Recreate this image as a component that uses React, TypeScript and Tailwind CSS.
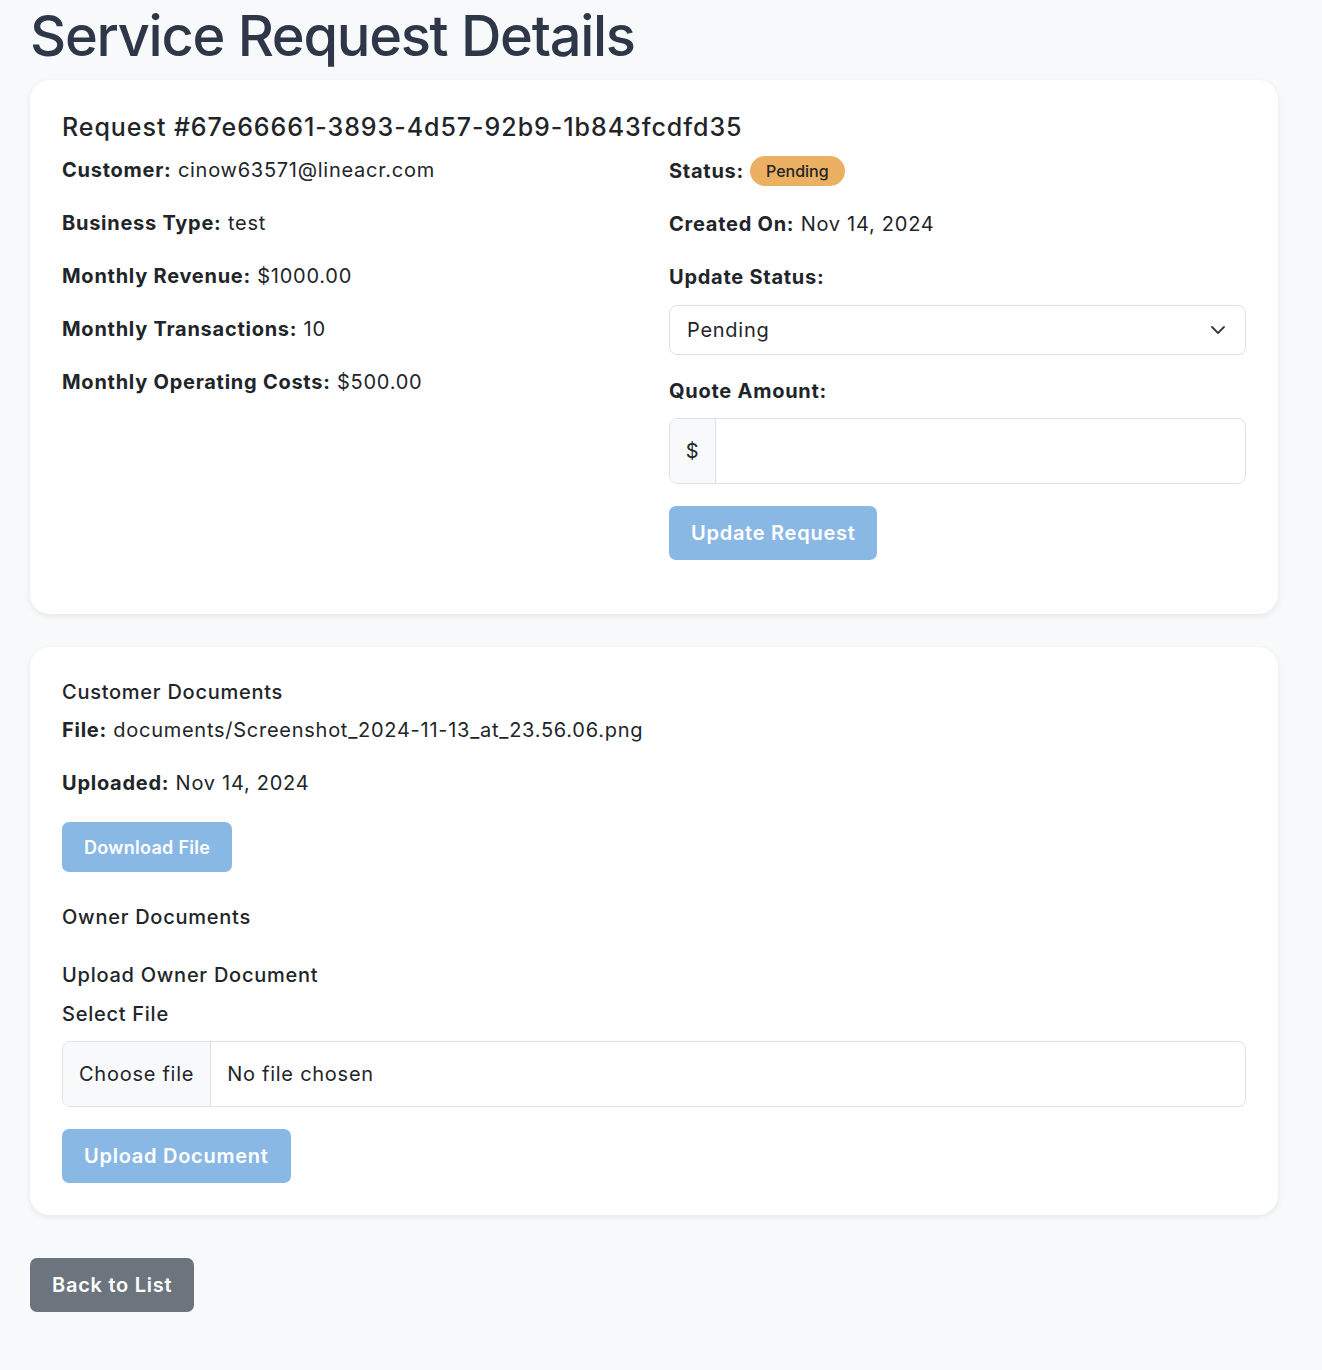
import { useState } from "react"

const FONT = { fontFamily: "Inter, 'Noto Sans', sans-serif" }

const LEFT_ROWS: { label: string; value: string }[] = [
  { label: "Customer:", value: "cinow63571@lineacr.com" },
  { label: "Business Type:", value: "test" },
  { label: "Monthly Revenue:", value: "$1000.00" },
  { label: "Monthly Transactions:", value: "10" },
  { label: "Monthly Operating Costs:", value: "$500.00" }
]

function Row({ label, value }: { label: string; value: string }) {
  return (
    <p className="mb-[23px] text-[20px] leading-[30px]">
      <span className="font-bold">{label}</span> {value}
    </p>
  )
}

export default function App() {
  const [status, setStatus] = useState("Pending")
  const [quote, setQuote] = useState("")

  return (
    <div
      className="min-h-[1370px] bg-[#f8f9fa] px-[30px] pb-10 tracking-[0.74px] text-[#212529]"
      style={FONT}>
      <h1 className="pt-[4px] text-[56px] font-medium leading-[64px] tracking-[-1.3px] text-[#2d3748]">
        Service Request Details
      </h1>

      {/* Request card */}
      <div className="mt-[12px] w-[1248px] rounded-[20px] bg-white p-8 shadow-[0_2px_6px_rgba(0,0,0,0.08)]">
        <h4 className="mb-[13px] text-[25px] font-medium leading-[30px] tracking-[0.95px]">
          Request #67e66661-3893-4d57-92b9-1b843fcdfd35
        </h4>
        <div className="flex gap-[30px]">
          <div className="w-[577px]">
            {LEFT_ROWS.map((r) => (
              <Row key={r.label} label={r.label} value={r.value} />
            ))}
          </div>
          <div className="w-[577px] pb-[22px] pt-[1px]">
            <div className="mb-[23px] flex h-[30px] items-center text-[20px]">
              <span className="font-bold">Status:</span>
              <span className="ml-[6px] rounded-full bg-[#ecb063] px-[16px] py-[4px] text-[16px] font-medium leading-[22px] tracking-normal">
                Pending
              </span>
            </div>
            <Row label="Created On:" value="Nov 14, 2024" />
            <div className="mb-[13px] text-[20px] font-bold leading-[30px]">
              Update Status:
            </div>
            <div className="relative">
              <select
                value={status}
                onChange={(e) => setStatus(e.target.value)}
                className="h-[50px] w-full appearance-none rounded-[8px] border border-[#dee2e6] bg-white pl-[17px] text-[20px] outline-none">
                <option>Pending</option>
                <option>In Progress</option>
                <option>Completed</option>
              </select>
              <svg
                className="pointer-events-none absolute right-[20px] top-[18px]"
                width="16"
                height="14"
                viewBox="0 0 16 14"
                fill="none">
                <path
                  d="M2 4l6 6 6-6"
                  stroke="#343a40"
                  strokeWidth="1.8"
                  strokeLinecap="round"
                  strokeLinejoin="round"
                />
              </svg>
            </div>
            <div className="mb-[12px] mt-[21px] text-[20px] font-bold leading-[30px]">
              Quote Amount:
            </div>
            <div className="flex h-[66px] overflow-hidden rounded-[8px] border border-[#dee2e6]">
              <span className="flex w-[46px] items-center justify-center border-r border-[#dee2e6] bg-[#f8f9fa] text-[20px]">
                $
              </span>
              <input
                value={quote}
                onChange={(e) => setQuote(e.target.value)}
                className="flex-1 px-4 text-[20px] outline-none"
              />
            </div>
            <button className="mt-[22px] h-[54px] rounded-[7px] bg-[#8ab8e5] px-[22px] text-[20px] font-semibold text-white">
              Update Request
            </button>
          </div>
        </div>
      </div>

      {/* Documents card */}
      <div className="mt-[33px] w-[1248px] rounded-[20px] bg-white p-8 shadow-[0_2px_6px_rgba(0,0,0,0.08)]">
        <h5 className="mb-[10px] text-[20px] font-medium leading-[26px]">
          Customer Documents
        </h5>
        <Row label="File:" value="documents/Screenshot_2024-11-13_at_23.56.06.png" />
        <Row label="Uploaded:" value="Nov 14, 2024" />
        <button className="mt-[1px] h-[50px] rounded-[7px] bg-[#8ab8e5] px-[22px] text-[18px] font-semibold tracking-[0.3px] text-white">
          Download File
        </button>
        <h5 className="mt-[33px] text-[20px] font-medium leading-[24px]">
          Owner Documents
        </h5>
        <h6 className="mt-[34px] text-[20px] font-medium leading-[24px]">
          Upload Owner Document
        </h6>
        <div className="mt-[15px] text-[20px] font-medium leading-[24px]">
          Select File
        </div>
        <div className="mt-[15px] flex h-[66px] items-center overflow-hidden rounded-[8px] border border-[#dee2e6] text-[20px]">
          <span className="flex h-full items-center border-r border-[#dee2e6] bg-[#f8f9fa] px-[16px] py-[8px]">
            Choose file
          </span>
          <span className="pl-[16px]">No file chosen</span>
        </div>
        <button className="mt-[22px] h-[54px] rounded-[7px] bg-[#8ab8e5] px-[22px] text-[20px] font-semibold text-white">
          Upload Document
        </button>
      </div>

      <button className="mt-[43px] h-[54px] rounded-[7px] bg-[#6c757d] px-[22px] text-[20px] font-semibold text-white">
        Back to List
      </button>
    </div>
  )
}
